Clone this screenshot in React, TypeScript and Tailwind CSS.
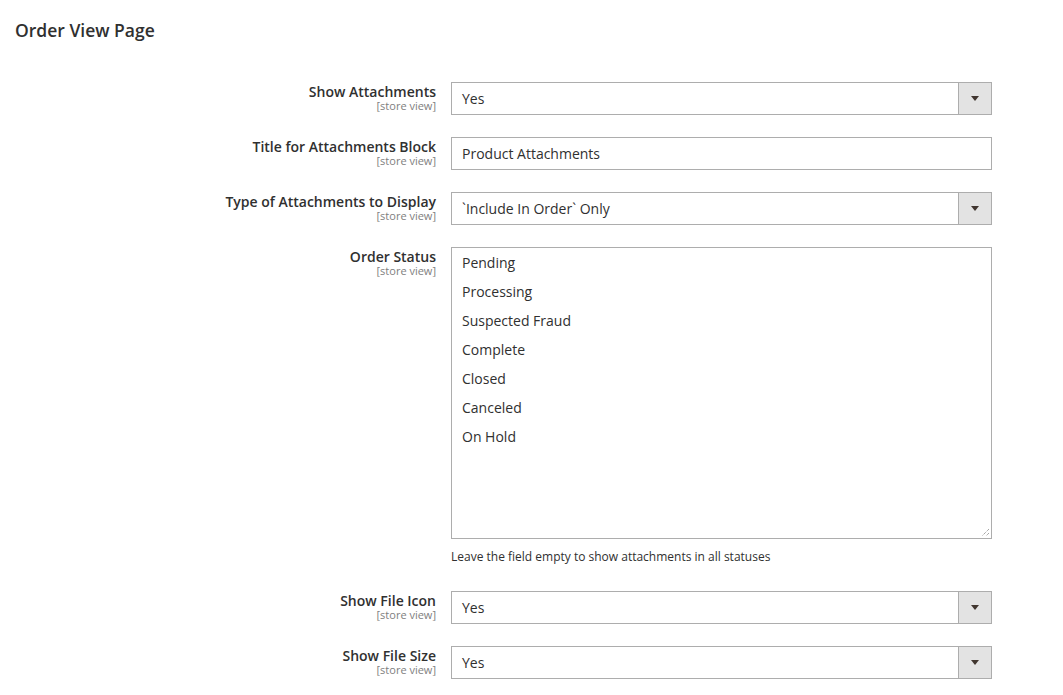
function Scope() {
  return <div className="text-[11px] leading-[12px] text-[#808080] font-normal">[store view]</div>;
}

function Label(props: { text: string; scope?: boolean }) {
  return (
    <div className="w-[436px] shrink-0 text-right pt-[2px]">
      <div className="text-[14px] leading-[16px] font-semibold text-[#303030]">{props.text}</div>
      {props.scope !== false && <Scope />}
    </div>
  );
}

function Select(props: { value: string }) {
  return (
    <div className="flex w-[541px] h-[33px] border border-[#adadad] bg-white">
      <div className="flex-1 flex items-center pl-[10px] text-[14px] text-[#303030]">{props.value}</div>
      <div className="w-[33px] h-full flex items-center justify-center bg-[#e3e3e3] border-l border-[#adadad]">
        <div className="w-0 h-0 border-l-[4px] border-r-[4px] border-t-[5px] border-l-transparent border-r-transparent border-t-[#41362f]" />
      </div>
    </div>
  );
}

function Input(props: { value: string }) {
  return (
    <div className="flex items-center w-[541px] h-[33px] border border-[#adadad] bg-white pl-[10px] text-[14px] text-[#303030]">
      {props.value}
    </div>
  );
}

function Row(props: { label: string; children: React.ReactNode }) {
  return (
    <div className="flex gap-[15px]">
      <Label text={props.label} />
      <div>{props.children}</div>
    </div>
  );
}

const statuses = ["Pending", "Processing", "Suspected Fraud", "Complete", "Closed", "Canceled", "On Hold"];

export default function App() {
  return (
    <div className="w-[1063px] h-[695px] bg-white overflow-hidden font-['Open_Sans',sans-serif]">
      <h2 className="pl-[15px] pt-[19px] text-[17.5px] leading-[22px] font-semibold text-[#303030]">Order View Page</h2>
      <div className="mt-[41px] flex flex-col gap-[22px]">
        <Row label="Show Attachments">
          <Select value="Yes" />
        </Row>
        <Row label="Title for Attachments Block">
          <Input value="Product Attachments" />
        </Row>
        <Row label="Type of Attachments to Display">
          <Select value="`Include In Order` Only" />
        </Row>
        <Row label="Order Status">
          <div className="relative w-[541px] h-[292px] border border-[#adadad] bg-white pt-[5px] pl-[10px]">
            {statuses.map((s) => (
              <div key={s} className="h-[29px] text-[14px] leading-[20px] text-[#303030]">{s}</div>
            ))}
            <svg className="absolute right-[1px] bottom-[1px]" width="9" height="9" viewBox="0 0 9 9">
              <path d="M8 1 L1 8 M8 5 L5 8" stroke="#808080" strokeWidth="1" strokeDasharray="1 1" />
            </svg>
          </div>
          <div className="mt-[10px] text-[12px] leading-[16px] text-[#303030]">
            Leave the field empty to show attachments in all statuses
          </div>
        </Row>
        <div className="mt-[4px] flex flex-col gap-[22px]">
          <Row label="Show File Icon">
            <Select value="Yes" />
          </Row>
          <Row label="Show File Size">
            <Select value="Yes" />
          </Row>
        </div>
      </div>
    </div>
  );
}
